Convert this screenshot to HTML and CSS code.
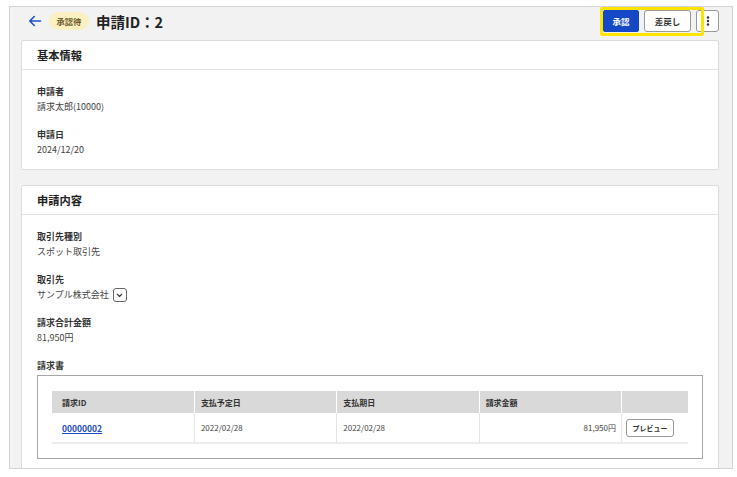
FILE: index.html
```html
<!DOCTYPE html>
<html lang="ja">
<head>
  <meta charset="UTF-8" />
  <meta name="viewport" content="width=device-width, initial-scale=1.0"/>
  <title>申請ID：2</title>
  <link rel="stylesheet" href="styles.css">
</head>
<body>
  <div class="frame">
    <header class="page-header">
      <a class="back" href="#" aria-label="戻る">
        <svg width="14" height="14" viewBox="0 0 14 14" fill="none" stroke="#1d4fd0" stroke-width="1.6" stroke-linecap="round" stroke-linejoin="round">
          <path d="M12.5 7H1.8M6.3 2.5L1.8 7l4.5 4.5"/>
        </svg>
      </a>
      <span class="badge">承認待</span>
      <h1 class="title">申請ID：2</h1>
      <div class="actions">
        <button class="btn btn-primary">承認</button>
        <button class="btn btn-return">差戻し</button>
        <button class="btn btn-icon" aria-label="メニュー">
          <svg width="4" height="12" viewBox="0 0 4 12" fill="#333">
            <circle cx="2" cy="2.5" r="1.2"/><circle cx="2" cy="6" r="1.2"/><circle cx="2" cy="9.5" r="1.2"/>
          </svg>
        </button>
        <div class="highlight"></div>
      </div>
    </header>

    <section class="card">
      <h2 class="card-title">基本情報</h2>
      <div class="card-body">
        <div class="field">
          <div class="label">申請者</div>
          <div class="value">請求太郎(10000)</div>
        </div>
        <div class="field">
          <div class="label">申請日</div>
          <div class="value">2024/12/20</div>
        </div>
      </div>
    </section>

    <section class="card">
      <h2 class="card-title">申請内容</h2>
      <div class="card-body">
        <div class="field">
          <div class="label">取引先種別</div>
          <div class="value">スポット取引先</div>
        </div>
        <div class="field">
          <div class="label">取引先</div>
          <div class="value">サンプル株式会社
            <button class="toggle" aria-label="詳細">
              <svg width="7" height="5" viewBox="0 0 7 5" fill="none" stroke="#333" stroke-width="1.2" stroke-linecap="round" stroke-linejoin="round">
                <path d="M1.2 1.2l2.3 2.3 2.3-2.3"/>
              </svg>
            </button>
          </div>
        </div>
        <div class="field">
          <div class="label">請求合計金額</div>
          <div class="value">81,950円</div>
        </div>
        <div class="field">
          <div class="label">請求書</div>
          <div class="invoice-box">
            <table class="invoice-table">
              <thead>
                <tr>
                  <th>請求ID</th>
                  <th>支払予定日</th>
                  <th>支払期日</th>
                  <th>請求金額</th>
                  <th class="col-action"></th>
                </tr>
              </thead>
              <tbody>
                <tr>
                  <td><a href="#" class="link">00000002</a></td>
                  <td>2022/02/28</td>
                  <td>2022/02/28</td>
                  <td class="num">81,950円</td>
                  <td class="col-action"><button class="btn btn-small">プレビュー</button></td>
                </tr>
              </tbody>
            </table>
          </div>
        </div>
      </div>
    </section>
  </div>
</body>
</html>
```

FILE: styles.css
```css
body {
  margin: 0;
  background: #ffffff;
  font-family: "Noto Sans CJK JP", "Noto Sans", sans-serif;
  color: #333;
}
.frame {
  margin: 6px 4px 0 9px;
  height: 461px;
  background: #f2f2f2;
  border: 1px solid #d4d4d4;
  overflow: hidden;
  padding: 0 13px 0 11px;
}
.page-header {
  height: 28px;
  margin-bottom: 5px;
  display: flex;
  align-items: center;
}
.back {
  display: flex;
  margin-left: 7px;
  margin-right: 7px;
}
.badge {
  background: #fcefc2;
  color: #6e5c2c;
  font-size: 8.3px;
  font-weight: 700;
  padding: 0 7.5px;
  height: 18px;
  line-height: 18px;
  border-radius: 9px;
}
.title {
  margin: 0 0 0 7px;
  font-size: 14.5px;
  font-weight: 700;
  color: #222;
}
.actions {
  margin-left: auto;
  display: flex;
  align-items: center;
  gap: 5px;
  position: relative;
}
.btn {
  font-family: inherit;
  font-size: 8.5px;
  font-weight: 700;
  height: 22px;
  padding: 0;
  border: 1px solid #999;
  border-radius: 3px;
  background: #fff;
  color: #333;
  cursor: pointer;
  white-space: nowrap;
}
.btn-primary {
  width: 36px;
  background: #1448c6;
  border-color: #1448c6;
  color: #fff;
  border-radius: 2px;
}
.btn-return {
  width: 47px;
}
.btn-icon {
  width: 23px;
  display: flex;
  align-items: center;
  justify-content: center;
}
.highlight {
  position: absolute;
  box-sizing: border-box;
  left: -3px;
  top: -3px;
  width: 104px;
  height: 29px;
  border: 3px solid #ffe400;
  border-radius: 2px;
  pointer-events: none;
}
.card {
  background: #fff;
  border: 1px solid #dcdcdc;
  border-radius: 2px;
  margin-bottom: 15px;
}
.card-title {
  margin: 0;
  height: 28px;
  line-height: 28px;
  padding: 0 15px;
  font-size: 11.25px;
  font-weight: 700;
  color: #222;
  border-bottom: 1px solid #e2e2e2;
}
.card-body {
  padding: 14px 15px 11px;
}
.field + .field {
  margin-top: 12px;
}
.label {
  font-size: 9px;
  font-weight: 700;
  line-height: 15px;
  color: #333;
}
.value {
  font-size: 9px;
  line-height: 16px;
  color: #444;
  display: flex;
  align-items: center;
  gap: 4px;
}
.toggle {
  width: 14px;
  height: 14px;
  padding: 0;
  border: 1px solid #666;
  border-radius: 3px;
  background: #fff;
  display: flex;
  align-items: center;
  justify-content: center;
}
.invoice-box {
  margin-top: 2px;
  border: 1px solid #a6a6a6;
  padding: 15px 14px 14px;
}
.invoice-table {
  width: 100%;
  border-collapse: collapse;
  font-size: 8px;
  table-layout: fixed;
}
.invoice-table th {
  background: #d9d9d9;
  height: 22px;
  text-align: left;
  padding: 0 6px;
  font-weight: 700;
  color: #333;
  border-left: 1px solid #fff;
}
.invoice-table td {
  height: 29px;
  padding: 0 6px;
  color: #444;
  border-left: 1px solid #e4e4e4;
  border-bottom: 2px solid #ececec;
}
.invoice-table th:first-child,
.invoice-table td:first-child {
  border-left: none;
  padding-left: 10px;
}
.invoice-table .col-action {
  width: 58px;
  padding: 0 4px;
}
.invoice-table .num {
  text-align: right;
  padding-right: 5px;
}
.link {
  color: #1a4db6;
  font-weight: 700;
  font-size: 8.5px;
  text-decoration: underline;
}
.btn-small {
  height: 18px;
  width: 48px;
  font-size: 7px;
}
```
